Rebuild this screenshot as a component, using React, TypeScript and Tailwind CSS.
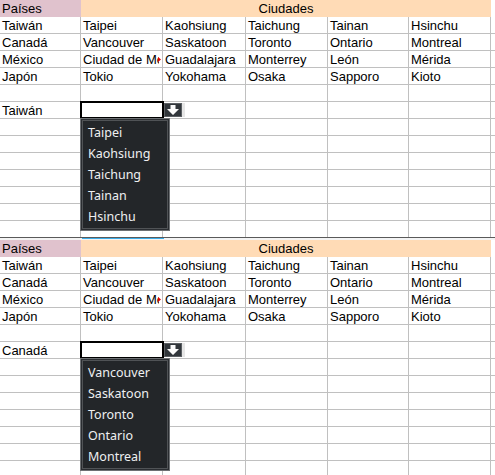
import React from 'react';

const rows = [
  ['Taiwán', 'Taipei', 'Kaohsiung', 'Taichung', 'Tainan', 'Hsinchu'],
  ['Canadá', 'Vancouver', 'Saskatoon', 'Toronto', 'Ontario', 'Montreal'],
  ['México', 'Ciudad de México', 'Guadalajara', 'Monterrey', 'León', 'Mérida'],
  ['Japón', 'Tokio', 'Yokohama', 'Osaka', 'Sapporo', 'Kioto'],
];

const cell =
  'relative h-[17px] border-r border-b border-[#c0c0c0] px-[2px] text-[13px] leading-[17px] overflow-hidden whitespace-nowrap';

function DropButton() {
  return (
    <div className="absolute left-[83px] top-[1px] w-[21px] h-[14px] bg-[#e6e6e6]">
      <svg width="18" height="14" viewBox="0 0 18 14">
        <rect x="0.5" y="0.5" width="17" height="13" fill="#31363b" stroke="#5b5f63" />
        <path d="M6.5 2h5v4h3.5L9 12 3 6h3.5z" fill="#fcfcfc" />
      </svg>
    </div>
  );
}

function Popup({ items }: { items: string[] }) {
  return (
    <div className="absolute left-[-1px] top-[16px] z-10 w-[90px] border border-[#6d7073] bg-[#2a2d31] p-px">
      <div className="border border-[#505356] bg-[#232629] py-[1px]">
        {items.map((it) => (
          <div
            key={it}
            className="h-[21px] pl-[5px] text-[12.5px] leading-[21px] text-[#eff0f1] font-['Noto_Sans',sans-serif]"
          >
            {it}
          </div>
        ))}
      </div>
    </div>
  );
}

function Sheet({ label, items, height }: { label: string; items: string[]; height: string }) {
  const empty = Array.from({ length: 10 });
  return (
    <div className={height === 'top' ? 'h-[237px] overflow-hidden' : 'h-[235px] overflow-hidden'}>
      {/* encabezado */}
      <div className="grid grid-cols-[81px_410px_1fr] h-[17px] text-[13px] leading-[17px]">
        <div className="bg-[#e0c2cd] px-[2px]">Países</div>
        <div className="bg-[#ffdbb6] text-center">Ciudades</div>
        <div />
      </div>
      <div className="grid grid-cols-[81px_82px_83px_82px_81px_82px_1fr]">
        {rows.map((r, i) => (
          <React.Fragment key={i}>
            {r.map((c, j) =>
              j === 1 && i === 2 ? (
                <div key={j} className={cell}>
                  <span className="block w-[76px] overflow-hidden">{c}</span>
                  <svg className="absolute right-[1px] top-[6px]" width="3" height="5" viewBox="0 0 3 5">
                    <path d="M0 0L3 2.5L0 5z" fill="#e00000" />
                  </svg>
                </div>
              ) : (
                <div key={j} className={cell}>
                  {c}
                </div>
              )
            )}
            <div className={cell} />
          </React.Fragment>
        ))}
        {[0, 1, 2, 3, 4, 5, 6].map((j) => (
          <div key={'e' + j} className={cell} />
        ))}
        {/* fila con la lista desplegable */}
        <div className={cell}>{label}</div>
        <div className="relative h-[17px] border-r border-b border-[#c0c0c0]">
          <div className="absolute left-[-1px] top-[-1px] w-[84px] h-[18px] border-2 border-black bg-white" />
          <DropButton />
          <Popup items={items} />
        </div>
        {[0, 1, 2, 3, 4].map((j) => (
          <div key={'s' + j} className={cell} />
        ))}
        {empty.map((_, i) =>
          [0, 1, 2, 3, 4, 5, 6].map((j) => <div key={'r' + i + '-' + j} className={cell} />)
        )}
      </div>
    </div>
  );
}

export default function App() {
  return (
    <div className="w-[495px] h-[475px] overflow-hidden bg-white text-black font-['Liberation_Sans',Arial,sans-serif]">
      <Sheet label="Taiwán" items={rows[0].slice(1)} height="top" />
      <div className="h-px bg-[#5a5a5a]" />
      <div className="grid grid-cols-[82px_82px_1fr] h-[2px] bg-[#f4f4f4]">
        <div />
        <div className="h-px bg-[#3daee9]" />
        <div />
      </div>
      <Sheet label="Canadá" items={rows[1].slice(1)} height="bottom" />
    </div>
  );
}
